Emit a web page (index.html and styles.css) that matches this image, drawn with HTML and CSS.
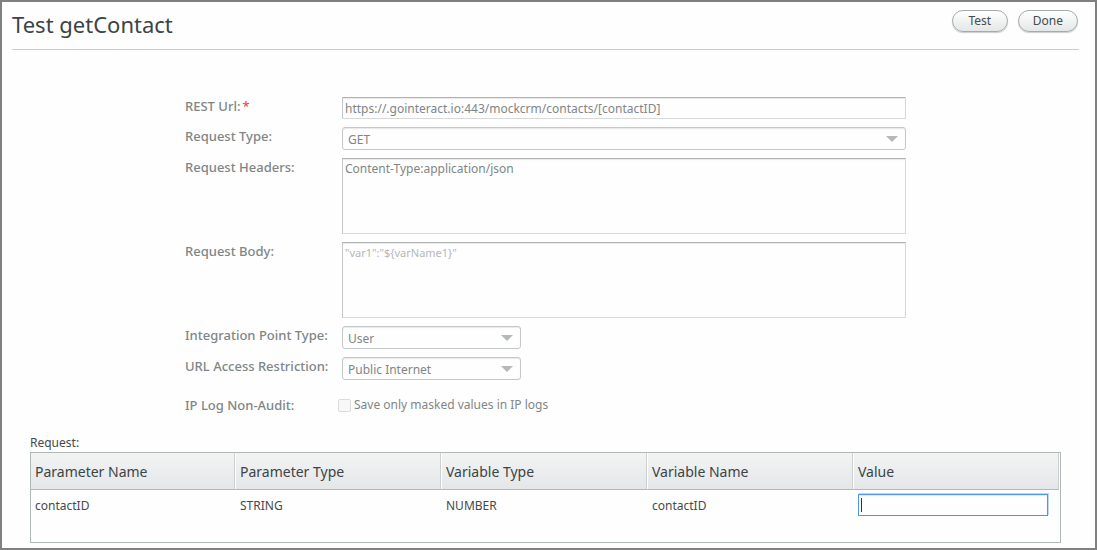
FILE: index.html
```html
<!DOCTYPE html>
<html lang="en">
<head>
    <meta charset="UTF-8">
    <meta name="viewport" content="width=device-width, initial-scale=1.0">
    <title>Test getContact</title>
    <link rel="stylesheet" href="styles.css">
</head>
<body>

<div class="page">
    <header class="header">
        <h1>Test getContact</h1>
        <div class="actions">
            <button type="button" class="pill-button">Test</button>
            <button type="button" class="pill-button">Done</button>
        </div>
    </header>

    <form class="form">
        <label for="rest-url">REST Url:<span class="required">*</span></label>
        <input type="text" id="rest-url" class="text-field" value="https://.gointeract.io:443/mockcrm/contacts/[contactID]" disabled>

        <label for="request-type">Request Type:</label>
        <div class="select-wrap">
            <select id="request-type" disabled>
                <option>GET</option>
            </select>
        </div>

        <label for="request-headers">Request Headers:</label>
        <textarea id="request-headers" class="text-field" disabled>Content-Type:application/json</textarea>

        <label for="request-body">Request Body:</label>
        <textarea id="request-body" class="text-field" placeholder='"var1":"${varName1}"' disabled></textarea>

        <label for="point-type">Integration Point Type:</label>
        <div class="select-wrap short">
            <select id="point-type" disabled>
                <option>User</option>
            </select>
        </div>

        <label for="url-access">URL Access Restriction:</label>
        <div class="select-wrap short">
            <select id="url-access" disabled>
                <option>Public Internet</option>
            </select>
        </div>

        <span class="audit-title">IP Log Non-Audit:</span>
        <div class="check-row">
            <input type="checkbox" id="mask-values" disabled>
            <label for="mask-values">Save only masked values in IP logs</label>
        </div>
    </form>

    <section class="request">
        <h2 id="request-title">Request:</h2>
        <div class="table-box">
            <table aria-labelledby="request-title">
                <thead>
                    <tr>
                        <th class="first">Parameter Name</th>
                        <th>Parameter Type</th>
                        <th>Variable Type</th>
                        <th>Variable Name</th>
                        <th>Value</th>
                    </tr>
                </thead>
                <tbody>
                    <tr>
                        <td class="first">contactID</td>
                        <td>STRING</td>
                        <td>NUMBER</td>
                        <td>contactID</td>
                        <td><input type="text" class="text-field value-input" aria-label="Value" placeholder=" " autofocus></td>
                    </tr>
                </tbody>
            </table>
        </div>
    </section>
</div>

</body>
</html>
```

FILE: styles.css
```css
* {
    box-sizing: border-box;
}
body {
    margin: 0;
    font-family: "Trebuchet MS", "Noto Sans", sans-serif;
    font-size: 12px;
    color: #444b4b;
    background-color: #fefefe;
}
.page {
    min-height: 100vh;
    border: 2px solid #808080;
}
.header {
    display: flex;
    justify-content: space-between;
    align-items: flex-start;
    height: 48px;
    margin: 0 16px 0 10px;
    padding-top: 8px;
    border-bottom: 1px solid #cccccc;
}
h1 {
    margin: 0;
    font-size: 22px;
    font-weight: normal;
    line-height: 28px;
    color: #3c4446;
}
.actions {
    display: flex;
    gap: 10px;
    padding-right: 1px;
}
.pill-button {
    min-width: 56px;
    height: 22px;
    padding: 0 14px 2px;
    border: 1px solid #a5aaaa;
    border-radius: 11px;
    background: linear-gradient(#ffffff, #e4e7e7);
    box-shadow: 0 1px 1px #cccccc;
    font-family: inherit;
    font-size: 12px;
    color: #444b4b;
}
.form {
    display: grid;
    grid-template-columns: 149px 1fr;
    gap: 8px;
    margin: 47px 189px 0 183px;
    color: #808686;
}
.form > label,
.audit-title {
    font-size: 13px;
    font-weight: 500;
    line-height: 18px;
    white-space: nowrap;
}
.required {
    margin-left: 2px;
    color: #ff4040;
}
.text-field {
    width: 100%;
    height: 22px;
    margin: 0;
    padding: 2px;
    border: 1px solid #d8dada;
    border-top-color: #b0b4b4;
    border-left-color: #c4c8c8;
    border-radius: 0;
    background-color: #fefefe;
    box-shadow: inset 0 1px 1px #e8e8e8;
    font-family: inherit;
    font-size: 12px;
    line-height: 16px;
    color: #808686;
}
textarea.text-field {
    display: block;
    height: 76px;
    resize: none;
}
.text-field::placeholder {
    font-size: 11px;
    color: #b4b8b8;
}
.select-wrap {
    display: grid;
    align-items: center;
}
.select-wrap.short {
    width: 179px;
}
.select-wrap select,
.select-wrap::after {
    grid-area: 1 / 1;
}
.select-wrap::after {
    content: "";
    justify-self: end;
    margin-right: 8px;
    border: 6px solid transparent;
    border-top-color: #b4b8b8;
    border-bottom: 0;
}
.select-wrap select {
    appearance: none;
    width: 100%;
    height: 23px;
    padding: 2px 5px 0;
    border: 1px solid #c4c8c8;
    border-radius: 3px;
    background-color: #fefefe;
    box-shadow: inset 0 1px 1px #e8e8e8;
    font-family: inherit;
    font-size: 12px;
    color: #808686;
    opacity: 1;
}
.audit-title,
.check-row {
    margin-top: 8px;
}
.check-row {
    display: flex;
    align-items: center;
    gap: 3px;
    margin-left: -4px;
    line-height: 18px;
}
.check-row input {
    appearance: none;
    width: 13px;
    height: 13px;
    margin: 0;
    border: 1px solid #dcdcdc;
    border-radius: 2px;
    background-color: #f8f8f8;
}
.request {
    margin: 20px 34px 5px 28px;
}
h2 {
    margin: 0;
    font-size: 12px;
    font-weight: normal;
    line-height: 18px;
}
.table-box {
    height: 91px;
    padding-right: 1px;
    border: 1px solid #b0b8b8;
}
table {
    width: 100%;
    table-layout: fixed;
    border-collapse: separate;
    border-spacing: 0;
}
th {
    height: 37px;
    padding: 0 5px;
    border-right: 1px solid #cccfcf;
    border-bottom: 1px solid #b0b8b8;
    background: linear-gradient(#f2f4f4, #e4e6e8);
    box-shadow: inset 1px 0 #ffffff;
    font-size: 14px;
    font-weight: normal;
    text-align: left;
    color: #3c4446;
}
th.first {
    width: 204px;
    box-shadow: none;
}
td {
    height: 30px;
    padding: 0 5px;
}
.first {
    padding-left: 4px;
}
td:last-child {
    padding-right: 11px;
}
.value-input {
    display: block;
    color: #222222;
}
.value-input:focus {
    border-color: #4d94ea;
    outline: none;
    box-shadow: 1px -1px #c0d8f8, inset 0 1px 1px #e8e8e8;
}
/* steady cursor while the field is empty */
.value-input:focus:placeholder-shown {
    caret-color: transparent;
    background-image: linear-gradient(#333333, #333333);
    background-position: 2px 3px;
    background-size: 1px 14px;
    background-repeat: no-repeat;
}
```
